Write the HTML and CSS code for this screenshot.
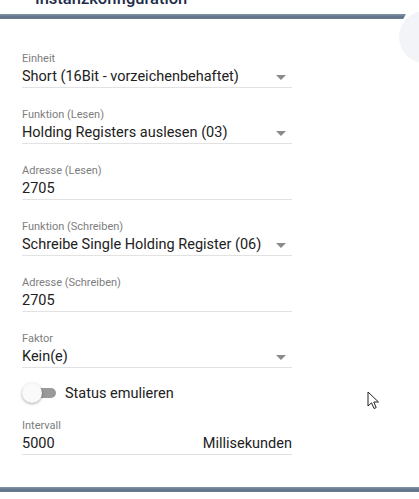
FILE: index.html
```html
<!DOCTYPE html>
<html lang="de">
<head>
<meta charset="utf-8">
<link rel="stylesheet" href="styles.css">
</head>
<body>
<div class="page">
  <div class="header">
    <h1 class="title">Instanzkonfiguration</h1>
  </div>
  <div class="topbar"></div>
  <div class="circle"></div>

  <div class="form">
    <div class="field">
      <div class="label">Einheit</div>
      <div class="value"><span>Short (16Bit - vorzeichenbehaftet)</span><span class="arrow"></span></div>
    </div>
    <div class="field">
      <div class="label">Funktion (Lesen)</div>
      <div class="value"><span>Holding Registers auslesen (03)</span><span class="arrow"></span></div>
    </div>
    <div class="field">
      <div class="label">Adresse (Lesen)</div>
      <div class="value"><span>2705</span></div>
    </div>
    <div class="field">
      <div class="label">Funktion (Schreiben)</div>
      <div class="value"><span>Schreibe Single Holding Register (06)</span><span class="arrow"></span></div>
    </div>
    <div class="field">
      <div class="label">Adresse (Schreiben)</div>
      <div class="value"><span>2705</span></div>
    </div>
    <div class="field">
      <div class="label">Faktor</div>
      <div class="value"><span>Kein(e)</span><span class="arrow"></span></div>
    </div>
    <div class="switch-row">
      <div class="switch"><span class="track"></span><span class="thumb"></span></div>
      <span class="switch-label">Status emulieren</span>
    </div>
    <div class="field">
      <div class="label">Intervall</div>
      <div class="value"><span>5000</span><span class="unit">Millisekunden</span></div>
    </div>
  </div>

  <div class="bottombar"></div>

  <svg class="cursor" width="13" height="20" viewBox="0 0 13 20">
    <path d="M1 1 L1 15 L4.5 11.8 L7 17.5 L9.2 16.6 L6.8 11 L11.5 11 Z" fill="#fff" stroke="#222" stroke-width="1" stroke-linejoin="round"/>
  </svg>
</div>
</body>
</html>
```
FILE: styles.css
```css
html, body {
  margin: 0;
  padding: 0;
  background: #fff;
}
body {
  width: 419px;
  height: 499px;
  overflow: hidden;
  font-family: Roboto, "Liberation Sans", Arial, sans-serif;
}
.page {
  position: relative;
  width: 419px;
  height: 499px;
  overflow: hidden;
}
.header {
  display: flow-root;
  height: 14px;
}
.title {
  margin: -10px 0 0 35px;
  font-size: 16.5px;
  line-height: 18px;
  font-weight: 500;
  color: #1c2b48;
  white-space: nowrap;
}
.topbar {
  width: 406px;
  height: 5px;
  background: linear-gradient(#8595a8, #5f7188 60%, #6c7d93);
  clip-path: polygon(0 0, 100% 0, 99.3% 100%, 0 100%);
}
.circle {
  position: absolute;
  left: 399px;
  top: 11px;
  width: 52px;
  height: 52px;
  border-radius: 50%;
  background: #f3f4f8;
}
.form {
  width: 270px;
  padding: 33px 0 0 22px;
}
.field {
  margin-bottom: 20px;
}
.label {
  font-size: 11px;
  line-height: 14px;
  color: #7d7d7d;
}
.value {
  display: flex;
  align-items: center;
  justify-content: space-between;
  margin-top: 1px;
  height: 20px;
  padding-bottom: 0;
  border-bottom: 1px solid #e2e2e2;
  font-size: 14.5px;
  line-height: 20px;
  color: #212121;
}
.arrow {
  width: 0;
  height: 0;
  margin-right: 6px;
  border-left: 5px solid transparent;
  border-right: 5px solid transparent;
  border-top: 5px solid #8a8a8a;
}
.unit {
  color: #212121;
}
.switch-row {
  display: flex;
  align-items: center;
  gap: 9px;
  height: 20px;
  margin-top: -5px;
  margin-bottom: 16px;
}
.switch {
  position: relative;
  width: 34px;
  height: 20px;
}
.track {
  position: absolute;
  left: 1px;
  top: 5px;
  width: 33px;
  height: 10px;
  border-radius: 5px;
  background: #9a9a9a;
}
.thumb {
  position: absolute;
  left: 0;
  top: 0;
  width: 20px;
  height: 20px;
  border-radius: 50%;
  background: #fafafa;
  box-shadow: 0 1px 3px rgba(0,0,0,0.35);
}
.switch-label {
  font-size: 14.5px;
  color: #212121;
}
.bottombar {
  position: absolute;
  left: 0;
  top: 487px;
  width: 419px;
  height: 5px;
  background: linear-gradient(#8595a8, #5f7188 60%, #6c7d93);
}
.cursor {
  position: absolute;
  left: 367px;
  top: 391px;
}
```
